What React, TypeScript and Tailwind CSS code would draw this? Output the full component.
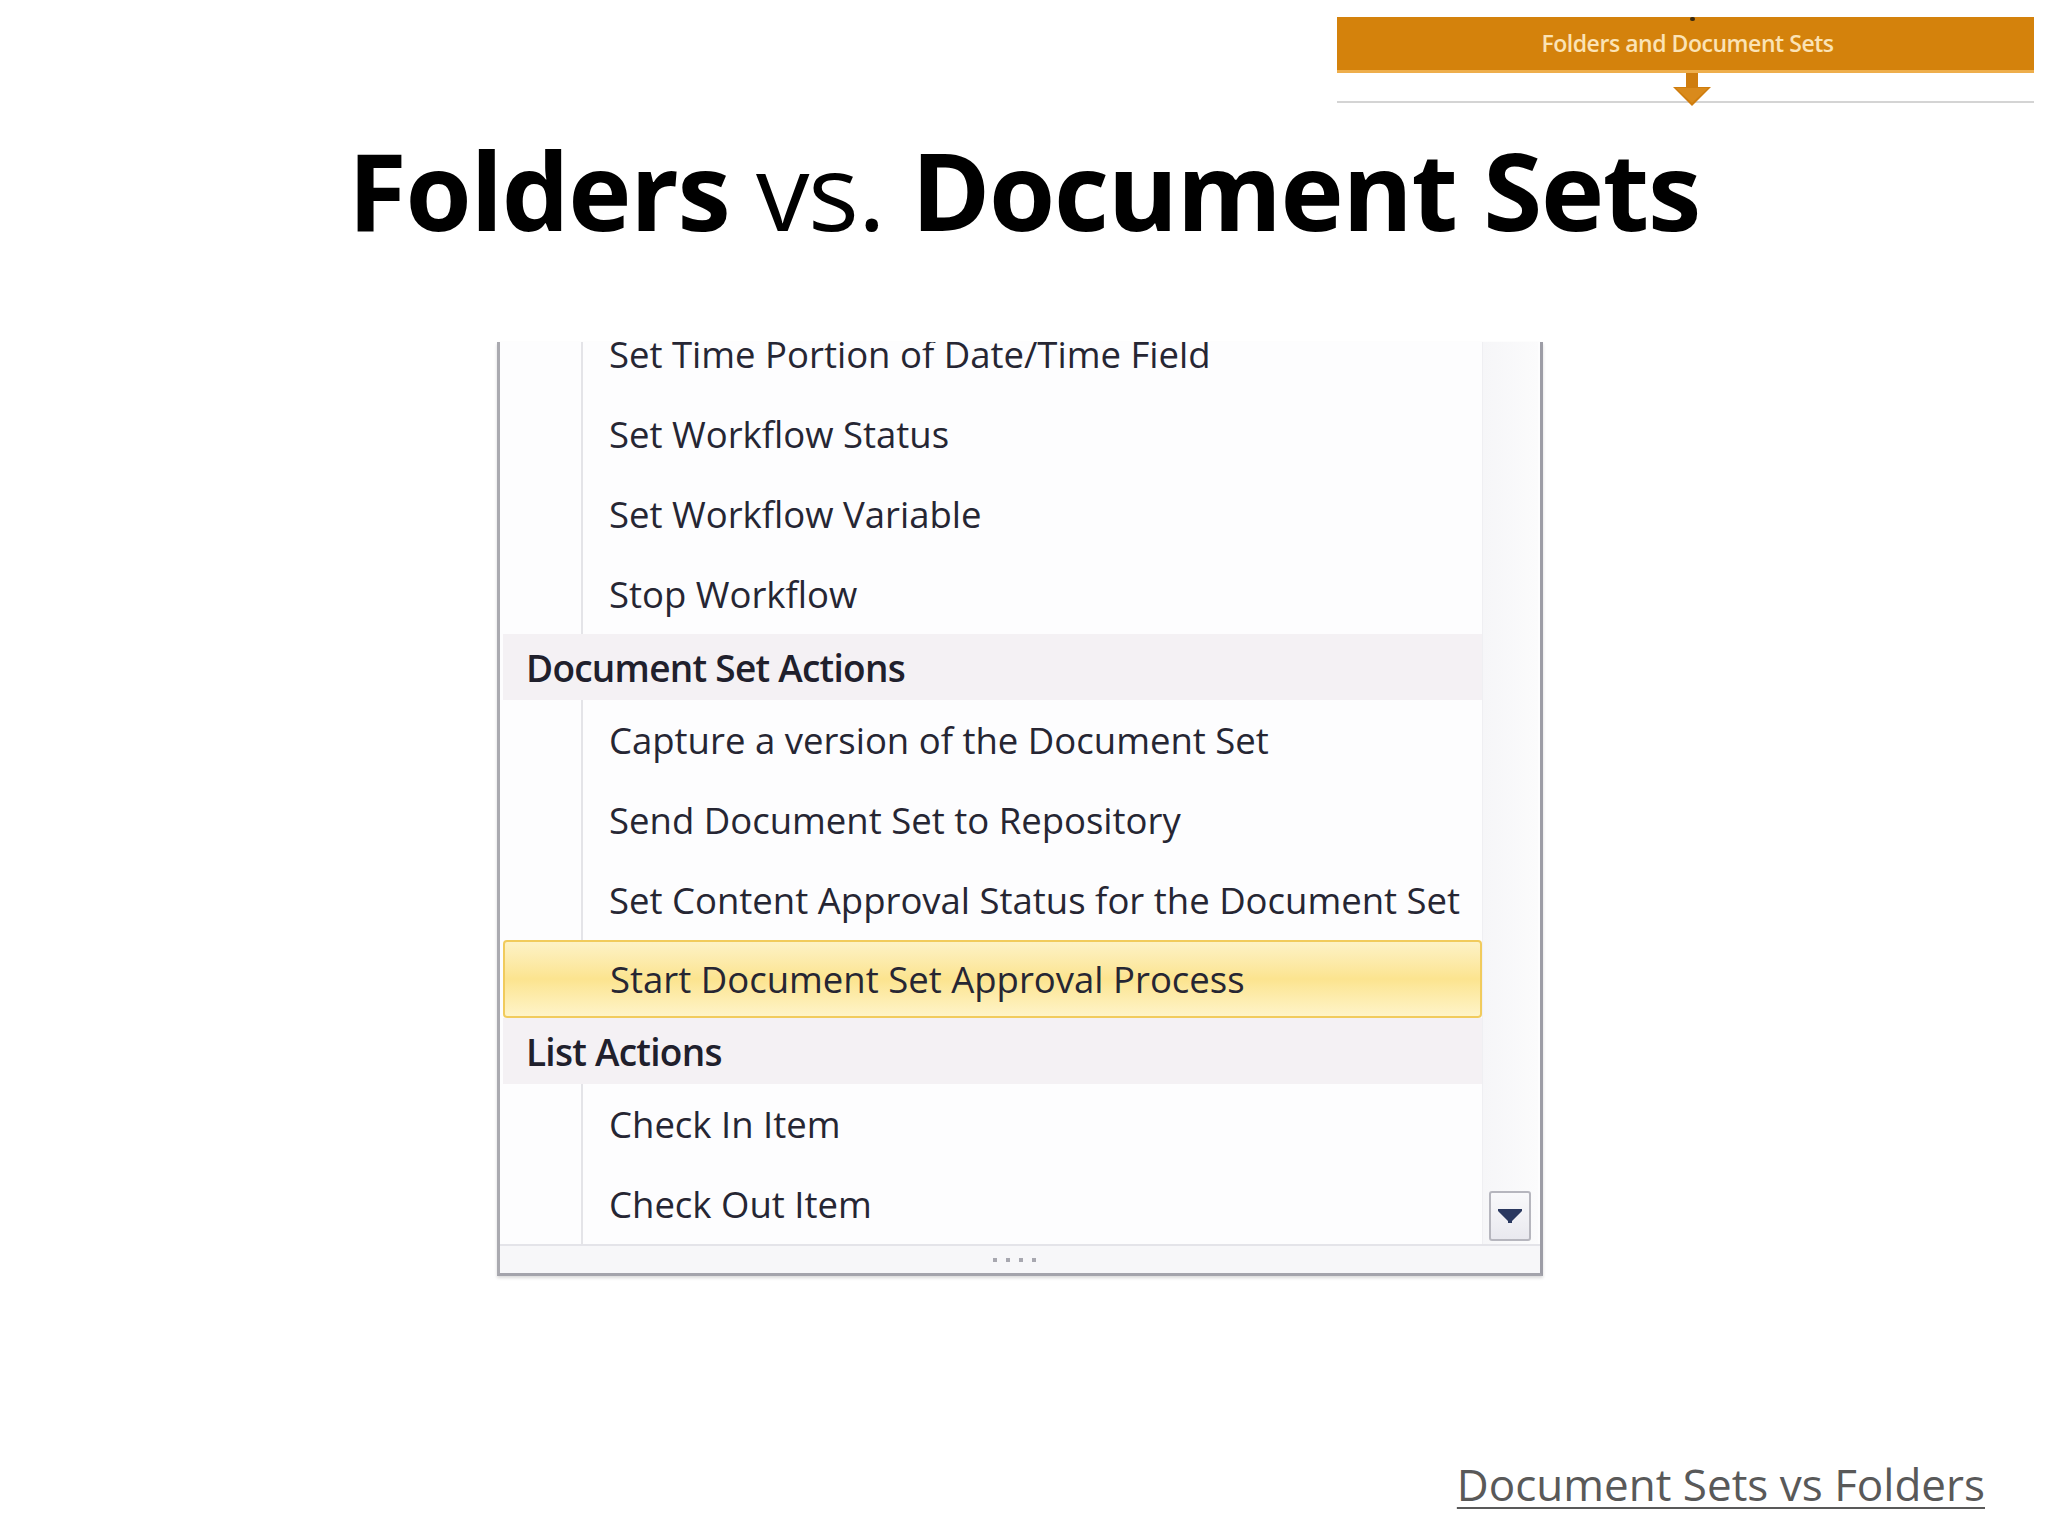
import React from "react";

type RowKind = "item" | "header" | "active";

interface Row {
  kind: RowKind;
  label: string;
}

const rows: Row[] = [
  { kind: "item", label: "Set Time Portion of Date/Time Field" },
  { kind: "item", label: "Set Workflow Status" },
  { kind: "item", label: "Set Workflow Variable" },
  { kind: "item", label: "Stop Workflow" },
  { kind: "header", label: "Document Set Actions" },
  { kind: "item", label: "Capture a version of the Document Set" },
  { kind: "item", label: "Send Document Set to Repository" },
  { kind: "item", label: "Set Content Approval Status for the Document Set" },
  { kind: "active", label: "Start Document Set Approval Process" },
  { kind: "header", label: "List Actions" },
  { kind: "item", label: "Check In Item" },
  { kind: "item", label: "Check Out Item" },
];

function Banner() {
  return (
    <div className="relative self-end mr-[14px] mt-[17px] w-[697px]">
      <div className="h-[56px] bg-[#d4820c] border-b-[3px] border-[#eeae4c] flex items-center justify-center pl-[4px]">
        <span className="font-['Open_Sans',sans-serif] font-semibold text-[23px] tracking-[-0.02em] text-[#fbe3b5] leading-none">
          Folders and Document Sets
        </span>
      </div>
      <div className="h-[30px] bg-white border-b-2 border-[#d4d4d4]" />
      <span className="absolute left-[353px] top-0 w-[5px] h-[4px] rounded-full bg-[#3a2a10]" />
      <svg
        className="absolute left-[335px] top-[56px]"
        width="40"
        height="33"
        viewBox="0 0 40 33"
      >
        <rect x="14" y="0" width="12" height="17" fill="#cf7d0e" />
        <polygon points="1,14 39,14 20,33" fill="#cf7d0e" />
        <polygon points="4,15 36,15 20,30" fill="#d98a1c" />
      </svg>
    </div>
  );
}

function MenuRow({ row }: { row: Row }) {
  if (row.kind === "header") {
    return (
      <div className="h-[66px] bg-[#f4f1f4] flex items-center pl-[23px]">
        <span className="font-['Open_Sans',sans-serif] font-semibold text-[37px] tracking-[-0.02em] text-[#20202c] leading-none">
          {row.label}
        </span>
      </div>
    );
  }
  if (row.kind === "active") {
    return (
      <div className="h-[78px] rounded-[4px] border-2 border-[#f1cb5c] bg-linear-to-b from-[#fdf2c6] via-[#fce48f] to-[#fef4c8] flex items-center pl-[105px]">
        <span className="font-['Open_Sans',sans-serif] text-[36.5px] text-[#262633] leading-none">
          {row.label}
        </span>
      </div>
    );
  }
  return (
    <div className="h-[80px] flex">
      <div className="w-[80px] shrink-0 border-r-2 border-[#e4e4e8]" />
      <div className="flex items-center pl-[26px]">
        <span className="font-['Open_Sans',sans-serif] text-[36.5px] text-[#262633] leading-none whitespace-nowrap">
          {row.label}
        </span>
      </div>
    </div>
  );
}

function ActionMenu() {
  return (
    <div className="ml-[497px] mt-[98px] w-[1046px] border-l-[3px] border-r-[3px] border-b-[3px] border-l-[#aaaab0] border-r-[#9d9da6] border-b-[#a4a4ac] bg-[#fdfdfe] flex flex-col shadow-[0_2px_3px_rgba(0,0,0,0.15)]">
      <div className="h-[902px] flex pl-[3px]">
        <div className="w-[979px] h-full overflow-hidden">
          <div className="-mt-[28px] flex flex-col">
            {rows.map((row) => (
              <MenuRow key={row.label} row={row} />
            ))}
          </div>
        </div>
        <div className="w-[56px] h-full bg-linear-to-r from-[#f6f6f8] to-[#fbfbfc] border-l border-[#efeff2] flex flex-col justify-end pb-[3px]">
          <div className="ml-[6px] w-[42px] h-[50px] rounded-[3px] border-2 border-[#b6b6be] bg-linear-to-b from-[#f9f9fb] to-[#e9e9ef] flex items-center justify-center">
            <svg width="24" height="14" viewBox="0 0 24 14">
              <polygon points="0,0 24,0 24,2 14,12 14,14 10,14 10,12 0,2" fill="#2a3860" />
            </svg>
          </div>
        </div>
      </div>
      <div className="h-[29px] border-t-2 border-[#e4e4e9] bg-[#f7f7f9] flex items-center justify-center gap-[9px] pr-[12px]">
        {[0, 1, 2, 3].map((i) => (
          <span key={i} className="w-[4px] h-[4px] bg-[#a8a8b0]" />
        ))}
      </div>
    </div>
  );
}

export default function App() {
  return (
    <div className="w-[2048px] h-[1536px] bg-white flex flex-col overflow-hidden">
      <Banner />
      <h1 className="mt-[33px] h-[108px] text-center font-['Open_Sans',sans-serif] text-[107px] leading-none text-black whitespace-nowrap tracking-[-0.012em]">
        <span className="font-bold">Folders</span>
        <span className="font-normal"> vs. </span>
        <span className="font-bold">Document Sets</span>
      </h1>
      <ActionMenu />
      <div className="mt-[186px] flex justify-end pr-[63px]">
        <span className="font-['Open_Sans',sans-serif] text-[44px] leading-none text-[#595959] underline decoration-2 underline-offset-[6px]">
          Document Sets vs Folders
        </span>
      </div>
    </div>
  );
}
